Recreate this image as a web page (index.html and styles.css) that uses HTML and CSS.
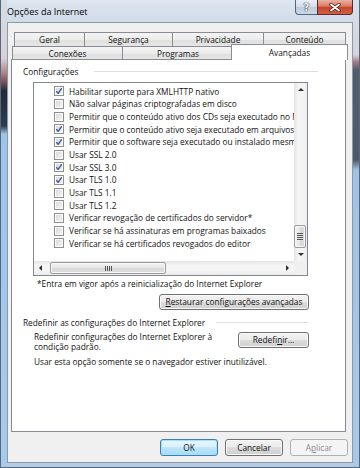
FILE: index.html
```html
<!DOCTYPE html>
<html lang="pt-BR">
<head>
    <meta charset="UTF-8">
    <meta name="viewport" content="width=device-width, initial-scale=1.0">
    <title>Opções da Internet</title>
    <link rel="stylesheet" href="styles.css">
</head>
<body>
<div class="window">
    <div class="titlebar">
        <span class="title">Opções da Internet</span>
        <div class="caption">
            <div class="cap-btn help">?</div>
            <div class="cap-btn close">
                <svg width="12" height="9" viewBox="0 0 12 9">
                    <path d="M2 1.5 L10 7.5 M10 1.5 L2 7.5" stroke="#4a1e18" stroke-width="3.4" stroke-linecap="round"/>
                    <path d="M2 1.5 L10 7.5 M10 1.5 L2 7.5" stroke="#fff" stroke-width="1.8" stroke-linecap="round"/>
                </svg>
            </div>
        </div>
    </div>

    <div class="client">
        <div class="tabrow back">
            <div class="tab t-geral">Geral</div>
            <div class="tab t-seg">Segurança</div>
            <div class="tab t-priv">Privacidade</div>
            <div class="tab t-cont">Conteúdo</div>
        </div>
        <div class="tabrow front">
            <div class="tab t-con">Conexões</div>
            <div class="tab t-prog">Programas</div>
            <div class="tab sel t-av">Avançadas</div>
        </div>

        <div class="panel">
            <div class="group-head g1">
                <span>Configurações</span>
                <div class="group-line"></div>
            </div>

            <div class="listbox">
                <div class="viewport">
                    <div class="opt"><span class="cb on"></span>Habilitar suporte para XMLHTTP nativo</div>
                    <div class="opt"><span class="cb"></span>Não salvar páginas criptografadas em disco</div>
                    <div class="opt"><span class="cb"></span>Permitir que o conteúdo ativo dos CDs seja executado no Meu Computador*</div>
                    <div class="opt"><span class="cb on"></span>Permitir que o conteúdo ativo seja executado em arquivos no Meu Computador*</div>
                    <div class="opt"><span class="cb on"></span>Permitir que o software seja executado ou instalado mesmo que a assinatura seja inválida</div>
                    <div class="opt"><span class="cb"></span>Usar SSL 2.0</div>
                    <div class="opt"><span class="cb on"></span>Usar SSL 3.0</div>
                    <div class="opt"><span class="cb on"></span>Usar TLS 1.0</div>
                    <div class="opt"><span class="cb"></span>Usar TLS 1.1</div>
                    <div class="opt"><span class="cb"></span>Usar TLS 1.2</div>
                    <div class="opt"><span class="cb"></span>Verificar revogação de certificados do servidor*</div>
                    <div class="opt"><span class="cb"></span>Verificar se há assinaturas em programas baixados</div>
                    <div class="opt"><span class="cb"></span>Verificar se há certificados revogados do editor</div>
                </div>
                <div class="vscroll">
                    <div class="sb-btn"><span class="arr up"></span></div>
                    <div class="track v">
                        <div class="thumb v"><span class="grip"></span></div>
                    </div>
                    <div class="sb-btn"><span class="arr down"></span></div>
                </div>
                <div class="hscroll">
                    <div class="sb-btn h"><span class="arr left"></span></div>
                    <div class="track h">
                        <div class="thumb h"><span class="grip"></span></div>
                    </div>
                    <div class="sb-btn h"><span class="arr right"></span></div>
                </div>
                <div class="corner"></div>
            </div>

            <p class="note">*Entra em vigor após a reinicialização do Internet Explorer</p>
            <button class="btn restore"><u>R</u>estaurar configurações avançadas</button>

            <div class="group-head g2">
                <span>Redefinir as configurações do Internet Explorer</span>
                <div class="group-line"></div>
            </div>
            <div class="reset-row">
                <p class="desc">Redefinir configurações do Internet Explorer à<br>condição padrão.</p>
                <button class="btn reset">Redefi<u>n</u>ir...</button>
            </div>
            <p class="desc last">Usar esta opção somente se o navegador estiver inutilizável.</p>
        </div>

        <div class="actions">
            <button class="btn act default">OK</button>
            <button class="btn act">Cancelar</button>
            <button class="btn act disabled">A<u>p</u>licar</button>
        </div>
    </div>
</div>
</body>
</html>
```

FILE: styles.css
```css
* { box-sizing: border-box; }
body {
    margin: 0;
    font-family: "Open Sans", "Noto Sans", sans-serif;
    font-size: 8.3px;
    color: #111;
}
p { margin: 0; }
u { text-decoration-thickness: 1px; text-underline-offset: 1px; }

.window {
    width: 360px;
    height: 468px;
    display: flex;
    flex-direction: column;
    background:
        linear-gradient(180deg, #d5dde7 0, #d8d0d8 58px, #b08890 72px, #7a4f5c 82px, #1f2a3a 91px, #2b3b52 126px, #9ec4ea 134px, #a6cbee 100%) left top / 7px 100% no-repeat,
        linear-gradient(180deg, #d8e0ea 0, #d4d4dc 55px, #a77a86 62px, #525d6c 70px, #4d5a6c 160px, #9fc3e6 170px, #a8caea 100%) right top / 7px 100% no-repeat,
        linear-gradient(180deg, #dfe7f0 0, #cfdbe8 22px, #b3cbe4 100%);
    box-shadow: inset 1px 0 #5b6676, inset -1px 0 #5b6676, inset 0 -1px #5b6676;
}

.titlebar {
    height: 22px;
    flex: none;
    display: flex;
    justify-content: space-between;
    align-items: flex-start;
    padding-left: 7px;
}
.title {
    font-size: 9px;
    line-height: 11px;
    margin-top: 6px;
    color: #000;
}
.caption { display: flex; margin-right: 7px; }
.cap-btn {
    height: 15px;
    border: 1px solid #56667e;
    border-top: none;
    display: flex;
    align-items: center;
    justify-content: center;
}
.help {
    width: 22px;
    border-right: none;
    border-radius: 0 0 0 4px;
    background: linear-gradient(180deg, #e9eef5, #d3dce8 50%, #bfccdc 50%, #cbd8e7);
    font-family: "DejaVu Sans", sans-serif;
    font-weight: bold;
    font-size: 10px;
    color: #fff;
    text-shadow: 0 0 1px #2d3846, 0 0 1px #2d3846, 0 0 1px #2d3846;
}
.close {
    width: 36px;
    border-color: #5a2b27;
    border-radius: 0 0 4px 0;
    background: linear-gradient(180deg, #eab0a2, #d97a65 45%, #c4452c 50%, #d55e43);
}

.client {
    flex: 1;
    margin: 0 7px 5px;
    border: 1px solid #8e99a6;
    background: #f0f0f0;
    padding: 9px 6px 6px 3px;
    display: flex;
    flex-direction: column;
}

.tabrow { display: flex; height: 14px; flex: none; align-items: flex-start; }
.tabrow.back { margin-left: 3px; }
.tabrow.front { margin-left: 1px; }
.tab {
    height: 14px;
    border: 1px solid #898c95;
    border-bottom: none;
    margin-right: -1px;
    background: linear-gradient(180deg, #f4f4f4, #ececec 50%, #dfdfdf 50%, #e6e6e6);
    text-align: center;
    line-height: 13px;
    white-space: nowrap;
}
.tab.sel {
    position: relative;
    z-index: 1;
    height: 16px;
    margin: -2px -2px 0 -2px;
    padding-top: 1px;
    background: #fff;
}
.t-geral { width: 71px; }
.t-seg { width: 89px; }
.t-priv { width: 92px; }
.t-cont { width: 83px; }
.t-con { width: 111px; }
.t-prog { width: 112px; }
.t-av { width: 117px; }

.panel {
    flex: none;
    height: 373px;
    margin-top: -1px;
    border: 1px solid #898c95;
    background: #fff;
    display: flex;
    flex-direction: column;
}

.group-head {
    display: flex;
    align-items: center;
    line-height: 11px;
    margin-left: 11px;
    white-space: nowrap;
}
.group-line { flex: 1; height: 1px; background: #d5dfe5; }
.g1 { margin-top: 6px; margin-right: 27px; }
.g1 .group-line { margin-left: 16px; }
.g2 { margin-top: 6.5px; margin-right: 37px; }
.g2 .group-line { margin-left: 11px; }

.listbox {
    margin: 5px 0 0 21px;
    width: 275px;
    height: 194px;
    border: 1px solid #828790;
    display: grid;
    grid-template-columns: 1fr 13px;
    grid-template-rows: 1fr 14px;
}
.viewport {
    overflow: hidden;
    padding-top: 2px;
}
.opt {
    height: 12.67px;
    display: flex;
    align-items: center;
    gap: 5px;
    padding-left: 20px;
    white-space: nowrap;
}
.cb {
    flex: none;
    width: 10px;
    height: 10px;
    border: 1px solid #8f8f8f;
    background: linear-gradient(135deg, #d6d6d6, #f6f6f6);
    box-shadow: inset 0 0 0 1px #fbfbfb;
}
.cb.on {
    background:
        url("data:image/svg+xml,%3Csvg xmlns='http://www.w3.org/2000/svg' width='8' height='8'%3E%3Cpath d='M1.3 4.2 L3.2 6.3 L6.8 1.2' fill='none' stroke='%233f5c9e' stroke-width='1.4'/%3E%3C/svg%3E") center / 8px 8px no-repeat,
        linear-gradient(135deg, #d6d6d6, #f6f6f6);
}

.vscroll {
    display: flex;
    flex-direction: column;
    background: linear-gradient(90deg, #e4e4e4, #f4f4f4 30%, #f4f4f4 70%, #eaeaea);
}
.hscroll {
    display: flex;
    background: linear-gradient(180deg, #e4e4e4, #f4f4f4 30%, #f4f4f4 70%, #eaeaea);
}
.corner { background: #f0f0f0; }
.sb-btn {
    flex: none;
    height: 13px;
    display: flex;
    align-items: center;
    justify-content: center;
}
.sb-btn.h { width: 13px; height: auto; }
.arr { width: 0; height: 0; border: 3px solid transparent; }
.arr.up { border-bottom-color: #303030; border-top-width: 0; }
.arr.down { border-top-color: #303030; border-bottom-width: 0; }
.arr.left { border-right-color: #303030; border-left-width: 0; }
.arr.right { border-left-color: #303030; border-right-width: 0; }

.track { flex: 1; display: flex; }
.track.v { flex-direction: column; justify-content: flex-end; }
.thumb {
    border: 1px solid #9b9b9b;
    border-radius: 2px;
    display: flex;
    align-items: center;
    justify-content: center;
    box-shadow: inset 0 0 0 1px #f7f7f7;
}
.thumb.v {
    height: 23px;
    margin: 0 1px 0 0;
    background: linear-gradient(90deg, #f2f2f2, #e6e6e6 50%, #d9d9d9 50%, #dcdcdc);
}
.thumb.h {
    width: 116px;
    margin: 1px 0 1px 3px;
    background: linear-gradient(180deg, #f2f2f2, #e6e6e6 50%, #d9d9d9 50%, #dcdcdc);
}
.thumb.v .grip {
    width: 6px;
    height: 7px;
    background: repeating-linear-gradient(180deg, #555 0 1px, transparent 1px 2px);
}
.thumb.h .grip {
    width: 7px;
    height: 5px;
    background: repeating-linear-gradient(90deg, #555 0 1px, transparent 1px 2px);
}

.note {
    margin: 1.5px 0 0 25px;
    line-height: 11px;
    white-space: nowrap;
}

.btn {
    font: inherit;
    color: #111;
    padding: 0;
    border: 1px solid #707070;
    border-radius: 3px;
    background: linear-gradient(180deg, #f2f2f2, #ebebeb 50%, #dddddd 50%, #cfcfcf);
    box-shadow: inset 0 0 0 1px #fafafa;
    line-height: 14px;
    white-space: nowrap;
}
.restore {
    align-self: flex-end;
    width: 150px;
    height: 16px;
    margin: 5.5px 36px 0 0;
}
.reset-row {
    display: flex;
    align-items: flex-start;
    margin-top: 4px;
    padding-left: 22px;
}
.desc { line-height: 10.7px; white-space: nowrap; }
.reset {
    width: 71px;
    height: 16px;
    margin: 0.5px 36px 0 auto;
}
.desc.last { margin: 3.6px 0 0 22px; }

.actions {
    display: flex;
    justify-content: flex-end;
    gap: 7px;
    margin: 7px -2px 0 0;
}
.act { width: 58px; height: 17px; line-height: 15px; }
.default {
    border-color: #3c7fb1;
    background: linear-gradient(180deg, #eaf6fd, #d9f0fc 50%, #bee6fd 50%, #a7d9f5);
    box-shadow: inset 0 0 0 1px #a6e0ff;
}
.disabled {
    color: #8a8a8a;
    border-color: #adb2b5;
    background: #f4f4f4;
    box-shadow: none;
}
```
